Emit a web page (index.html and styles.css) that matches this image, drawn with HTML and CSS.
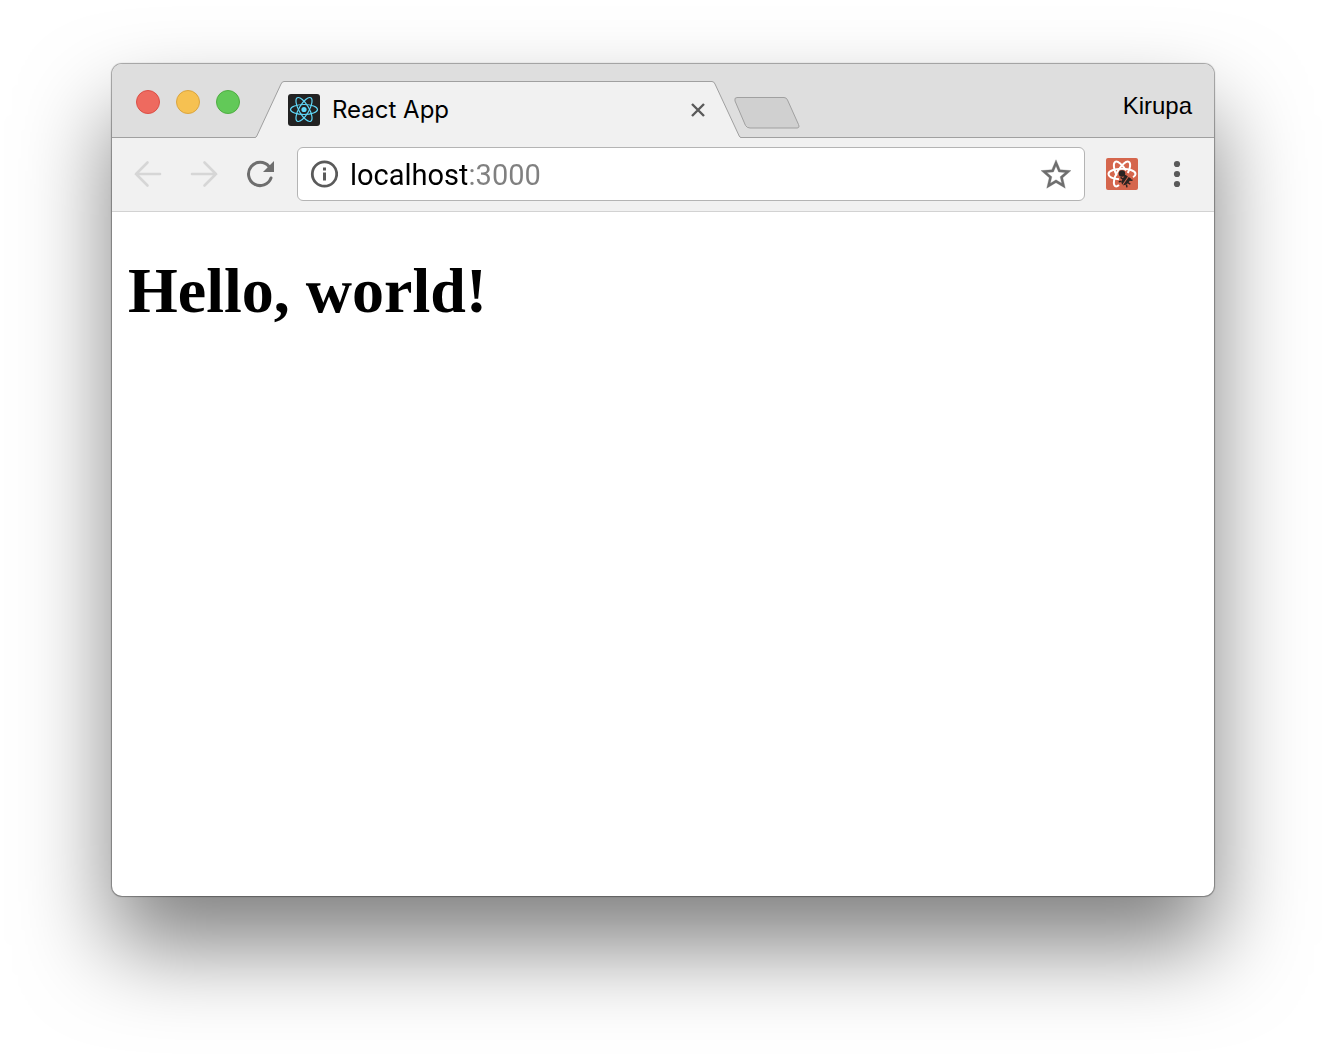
FILE: index.html
```html
<!DOCTYPE html>
<html lang="en">
<head>
    <meta charset="UTF-8">
    <title>React App</title>
    <link rel="stylesheet" href="styles.css">
</head>
<body>

<div class="window">

    <header class="tab-strip">
        <div class="lights">
            <button class="light close" aria-label="Close window"></button>
            <button class="light minimize" aria-label="Minimize window"></button>
            <button class="light zoom" aria-label="Zoom window"></button>
        </div>

        <div class="tab">
            <svg class="tab-edge" viewBox="0 0 28 57" width="28" height="57" aria-hidden="true">
                <path class="tab-fill" d="M-1 57V56.5Q0 56.5 .8 55L25 3Q26 .5 28 .5V57Z"/>
                <path class="tab-line" d="M-1 56.5Q0 56.5 .8 55L25 3Q26 .5 28 .5"/>
            </svg>
            <div class="tab-body">
                <svg class="favicon" viewBox="0 0 32 32" width="32" height="32" aria-hidden="true">
                    <rect width="32" height="32" rx="3" fill="#222"/>
                    <circle cx="16" cy="15.5" r="2.6" fill="#61dafb"/>
                    <g fill="none" stroke="#61dafb" stroke-width="1.2">
                        <ellipse cx="16" cy="15.5" rx="13.5" ry="5"/>
                        <ellipse cx="16" cy="15.5" rx="13.5" ry="5" transform="rotate(60 16 15.5)"/>
                        <ellipse cx="16" cy="15.5" rx="13.5" ry="5" transform="rotate(120 16 15.5)"/>
                    </g>
                </svg>
                <span class="tab-title">React App</span>
                <button class="tab-close" aria-label="Close tab">
                    <svg viewBox="0 0 16 16" width="16" height="16">
                        <path d="M2 2L14 14M14 2L2 14" stroke="#5a5a5a" stroke-width="2.4"/>
                    </svg>
                </button>
            </div>
            <svg class="tab-edge" viewBox="0 0 28 57" width="28" height="57" aria-hidden="true">
                <path class="tab-fill" d="M29 57V56.5Q28 56.5 27.2 55L3 3Q2 .5 0 .5V57Z"/>
                <path class="tab-line" d="M29 56.5Q28 56.5 27.2 55L3 3Q2 .5 0 .5"/>
            </svg>
        </div>

        <button class="new-tab" aria-label="New tab">
            <svg viewBox="0 0 66 32" width="66" height="32">
                <path d="M3 .5H50Q52.500 .5 53.500 3L64.500 27.500Q66 31 63 31H16Q13 31 11.500 28.500L1 4Q0 .5 3 .5Z" fill="#d0d0d0" stroke="#a0a0a0"/>
            </svg>
        </button>

        <button class="profile">Kirupa</button>
    </header>

    <nav class="toolbar">
        <div class="nav-buttons">
            <button aria-label="Back" disabled>
                <svg viewBox="0 0 28 28" width="28" height="28">
                    <path d="M13.500 2.500L2 14L13.500 25.500M2 14H26" stroke="#d6d6d6"/>
                </svg>
            </button>
            <button aria-label="Forward" disabled>
                <svg viewBox="0 0 28 28" width="28" height="28">
                    <path d="M14.500 2.500L26 14L14.500 25.500M26 14H2" stroke="#d6d6d6"/>
                </svg>
            </button>
            <button aria-label="Reload">
                <svg viewBox="0 0 28 28" width="28" height="28">
                    <path class="arc" d="M23 6.500A11.600 11.600 0 1 0 25 18" stroke="#6e6e6e"/>
                    <path d="M28 1V12H17Z" fill="#6e6e6e" stroke="none"/>
                </svg>
            </button>
        </div>

        <form class="omnibox">
            <button type="button" aria-label="Site information">
                <svg viewBox="0 0 28 28" width="28" height="28">
                    <circle cx="14.500" cy="14" r="12.200" fill="none" stroke="#5a5a5a" stroke-width="2.800"/>
                    <path d="M13 7.500h3v3h-3zM13 12.500h3v8h-3z" fill="#5a5a5a"/>
                </svg>
            </button>
            <input type="text" class="url" aria-label="Address" value="localhost:3000" spellcheck="false">
            <button type="button" aria-label="Bookmark this page">
                <svg viewBox="2 1.500 20 20" width="30" height="30">
                    <path d="M22 9.240l-7.190-.62L12 2 9.190 8.630 2 9.240l5.460 4.730L5.820 21 12 17.270 18.180 21l-1.630-7.030L22 9.240zM12 15.400l-3.760 2.270 1-4.280-3.320-2.880 4.380-.38L12 6.100l1.710 4.040 4.380.38-3.320 2.880 1 4.280L12 15.400z" fill="#6e6e6e" stroke="#6e6e6e" stroke-width=".2"/>
                </svg>
            </button>
        </form>

        <button class="extension" aria-label="React Developer Tools">
            <svg viewBox="0 0 32 32" width="32" height="32">
                <rect width="32" height="32" rx="2" fill="#d5664d"/>
                <g fill="none" stroke="#fff" stroke-width="2">
                    <path d="M13 21.200C7 20.800 2.500 18.800 2.500 16C2.500 13 8.500 10.800 16 10.800S29.500 13 29.500 16C29.500 17.500 28.600 18.400 27 19.200"/>
                    <path d="M13 27C11.500 28.300 10.200 28.700 9.200 28.100C6.800 26.700 7.800 20 11.500 13.500S20.400 2.500 22.800 3.900C25 5.200 24.400 10 21.800 15"/>
                    <path d="M10.800 17.500C7.800 12 6.800 5.300 9.200 3.900S16.500 6.500 20 12.500"/>
                </g>
                <circle cx="16" cy="15.500" r="3.200" fill="#2b2422"/>
                <g transform="rotate(35 20 22)">
                    <path d="M16.500 18H19.500V28Q16.500 26.500 16.500 23ZM20.500 18H23.500V23Q23.500 26.500 20.500 28Z" fill="#2b2422"/>
                    <path d="M17 20L14.500 18.500M17 23H14M17 25.500L15 27.500M23 20L25.500 18.500M23 23H26M23 25.500L25 27.500" fill="none" stroke="#2b2422" stroke-width="1.500"/>
                </g>
            </svg>
        </button>
        <button class="menu" aria-label="Menu">
            <svg viewBox="0 0 24 28" width="24" height="28">
                <g fill="#5a5a5a">
                    <circle cx="12" cy="4" r="3.100"/>
                    <circle cx="12" cy="14" r="3.100"/>
                    <circle cx="12" cy="24" r="3.100"/>
                </g>
            </svg>
        </button>
    </nav>

    <main class="page">
        <h1>Hello, world!</h1>
    </main>

</div>

</body>
</html>
```
FILE: styles.css
```css
* {
    box-sizing: border-box;
}

body {
    margin: 0;
    padding: 64px 112px 160px;
    min-height: 100vh;
    display: flex;
    background-color: #fff;
    font-family: Inter, Roboto, "Liberation Sans", sans-serif;
    color: #000;
}

button {
    display: block;
    flex: none;
    padding: 0;
    border: none;
    background: none;
    font: inherit;
    color: inherit;
}

svg {
    display: block;
    flex: none;
}

.window {
    flex: 1;
    min-width: 0;
    display: flex;
    flex-direction: column;
    border-radius: 10px;
    background-color: #fff;
    box-shadow: 0 0 1px 1px rgba(0, 0, 0, 0.35), 0 50px 90px rgba(0, 0, 0, 0.5);
}

/* tab strip */

.tab-strip {
    display: flex;
    align-items: flex-end;
    height: 74px;
    padding: 0 22px 0 24px;
    border-bottom: 1px solid #a0a0a0;
    border-radius: 10px 10px 0 0;
    background-color: #dedede;
}

.lights {
    display: flex;
    align-self: flex-start;
    gap: 16px;
    margin: 26px 16px 0 0;
}

.light {
    width: 24px;
    height: 24px;
    border: 1px solid;
    border-radius: 50%;
}

.close {
    background-color: #ee6a5f;
    border-color: #dc4f46;
}

.minimize {
    background-color: #f6c151;
    border-color: #dba53f;
}

.zoom {
    background-color: #62c958;
    border-color: #4fae42;
}

.tab {
    display: flex;
    flex: 0 1 484px;
    min-width: 0;
    margin-bottom: -1px;
}

.tab-edge {
    overflow: visible;
}

.tab-fill {
    fill: #f1f1f1;
}

.tab-line {
    fill: none;
    stroke: #a0a0a0;
}

.tab-body {
    display: flex;
    flex: 1;
    align-items: center;
    gap: 12px;
    min-width: 0;
    padding: 0 6px 0 4px;
    border-top: 1px solid #a0a0a0;
    background-color: #f1f1f1;
}

.tab-title {
    flex: 1;
    overflow: hidden;
    white-space: nowrap;
    font-size: 24px;
    line-height: 32px;
}

.new-tab {
    margin: 0 0 8px -6px;
}

.profile {
    margin: 0 0 17px auto;
    font-family: "Liberation Sans", Arial, sans-serif;
    font-size: 24px;
    line-height: 28px;
}

/* toolbar */

.toolbar {
    display: flex;
    align-items: center;
    height: 74px;
    padding: 0 25px 1px 22px;
    border-bottom: 1px solid #d2d2d2;
    background-color: #f1f1f1;
}

.nav-buttons {
    display: flex;
    gap: 28px;
}

.nav-buttons path {
    fill: none;
    stroke-width: 2.6px;
    stroke-linecap: round;
}

.nav-buttons .arc {
    stroke-width: 3px;
}

.nav-buttons path[fill] {
    fill: #6e6e6e;
}

.omnibox {
    display: flex;
    flex: 1;
    align-items: center;
    min-width: 0;
    height: 54px;
    margin: 0 21px 0 23px;
    padding: 0 13px 0 12px;
    border: 1px solid #b4b4b4;
    border-radius: 6px;
    background-color: #fff;
}

.url {
    flex: 1;
    min-width: 0;
    margin: 0 12px;
    padding: 2px 0 0;
    border: none;
    outline: none;
    font-family: Roboto, "Liberation Sans", sans-serif;
    font-size: 29px;
    line-height: 36px;
    /* host in black, port in grey */
    background: linear-gradient(to right, #000 117px, #808080 117px);
    -webkit-background-clip: text;
    background-clip: text;
    color: transparent;
    caret-color: #000;
}

.extension {
    margin-right: 27px;
}

/* page */

.page {
    flex: 1;
    padding: 0 16px;
}

h1 {
    margin: 42px 0;
    font-family: "Liberation Serif", "Times New Roman", serif;
    font-size: 64px;
    line-height: 74px;
}
```
